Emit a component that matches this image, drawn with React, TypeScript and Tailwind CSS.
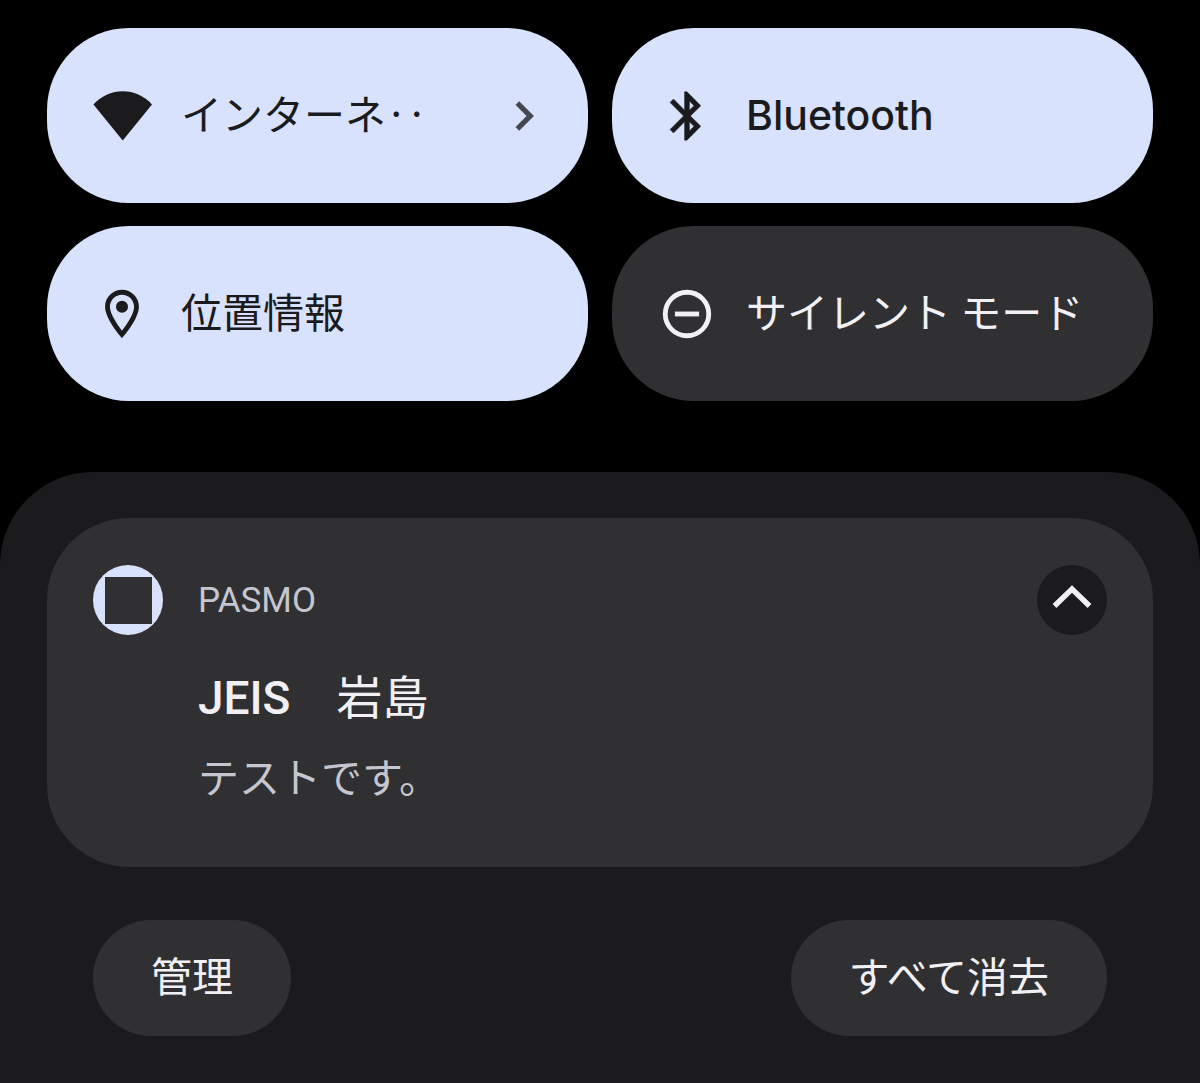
import type { ReactNode } from "react";

const JP = "font-['Noto_Sans_CJK_JP',sans-serif]";

function WifiIcon() {
  return (
    <svg viewBox="0 0 58 58" className="size-[58px] shrink-0 overflow-visible" fill="currentColor" aria-hidden="true">
      <path d="M0.5 17.5A39 39 0 0 1 59 17.5L29.7 53.5Z" />
    </svg>
  );
}

function BluetoothIcon() {
  return (
    <svg viewBox="0 0 24 24" className="size-[58px] shrink-0" fill="currentColor" stroke="currentColor" strokeWidth="0.2" aria-hidden="true">
      <path d="M17.71 7.71L12 2h-1v7.59L6.41 5 5 6.41 10.59 12 5 17.59 6.41 19 11 14.41V22h1l5.71-5.71-4.3-4.29 4.3-4.29zM13 5.83l1.88 1.88L13 9.59V5.83zm1.88 10.46L13 18.17v-3.76l1.88 1.88z" />
    </svg>
  );
}

function PlaceIcon() {
  return (
    <svg viewBox="0 0 24 24" className="size-[58px] shrink-0" fill="currentColor" aria-hidden="true">
      <path d="M12 2C8.13 2 5 5.13 5 9c0 5.25 7 13 7 13s7-7.75 7-13c0-3.87-3.13-7-7-7zM7 9c0-2.76 2.24-5 5-5s5 2.24 5 5c0 2.88-2.88 7.19-5 9.88C9.92 16.21 7 11.85 7 9z" />
      <circle cx="12" cy="9" r="2.5" />
    </svg>
  );
}

function SilentIcon() {
  return (
    <svg viewBox="0 0 24 24" className="size-[58px] shrink-0" fill="none" stroke="currentColor" strokeWidth="2" aria-hidden="true">
      <circle cx="12" cy="12" r="9" />
      <path d="M7 12h10" />
    </svg>
  );
}

function ChevronRight() {
  return (
    <svg viewBox="0 0 24 24" className="size-[58px] shrink-0 text-[#45474f]" fill="currentColor" stroke="currentColor" strokeWidth="0.2" aria-hidden="true">
      <path d="M10 6L8.59 7.41 13.17 12l-4.58 4.59L10 18l6-6z" />
    </svg>
  );
}

type TileProps = { icon: ReactNode; label: string; latin?: boolean; active?: boolean; trailing?: ReactNode };

function Tile({ icon, label, latin = false, active = false, trailing }: TileProps) {
  return (
    <button
      type="button"
      aria-pressed={active}
      className={`flex h-[175px] min-w-0 items-center rounded-[82px] pr-[35px] pl-[46px] text-left ${
        active ? "bg-[#d8e2fd] text-[#1b1b1e]" : "bg-[#303032] text-[#f2f0f5]"
      }`}
    >
      {icon}
      <span
        className={`ml-[30px] flex-1 text-[41px] leading-[60px] whitespace-nowrap ${
          latin ? "pb-[2px] font-['Inter',sans-serif] font-medium" : "pb-[8px] font-normal"
        }`}
      >
        {label}
      </span>
      {trailing}
    </button>
  );
}

export default function App() {
  return (
    <main lang="ja" className={`flex min-h-screen flex-col bg-black ${JP}`}>
      <section className="grid grid-cols-2 gap-x-6 gap-y-[23px] px-[47px] pt-7 pb-[71px]">
        <Tile icon={<WifiIcon />} label="インターネ‥" active trailing={<ChevronRight />} />
        <Tile icon={<BluetoothIcon />} label="Bluetooth" latin active />
        <Tile icon={<PlaceIcon />} label="位置情報" active />
        <Tile icon={<SilentIcon />} label="サイレント モード" />
      </section>

      <section className="flex-1 rounded-t-[93px] bg-[#1b1b1d] px-[47px] pt-[46px] pb-[47px]">
        <article className="flex h-[349px] items-start rounded-[82px] bg-[#303032] px-[46px] pt-[47px]">
          <div className="flex size-[70px] shrink-0 items-center justify-center rounded-full bg-[#d8e2fd]">
            <div className="size-[47px] bg-[#303032]" />
          </div>
          <div className="ml-[35px] flex-1">
            <p className="pt-px font-['Roboto',sans-serif] text-[35px] leading-[70px] text-[#c5c6d0]">PASMO</p>
            <h2 className="mt-[27px] font-['Roboto','Noto_Sans_CJK_JP',sans-serif] text-[46px] leading-[70px] font-medium text-[#f2f0f5]">
              JEIS<span className="font-normal">　岩島</span>
            </h2>
            <p className="mt-[12px] text-[41px] leading-[60px] text-[#c5c6d0]">テストです。</p>
          </div>
          <button
            type="button"
            aria-label="折りたたむ"
            className="flex size-[70px] shrink-0 items-center justify-center rounded-full bg-[#1b1b1d] text-[#f2f0f5]"
          >
            <svg viewBox="0 0 70 70" className="size-[70px]" fill="none" stroke="currentColor" strokeWidth="5.4" aria-hidden="true">
              <path d="M17.5 41L35 24L52.5 41" />
            </svg>
          </button>
        </article>

        <div className="mt-[53px] flex justify-between px-[46px] text-[41px] leading-[60px] text-[#f2f0f5]">
          <button type="button" className="h-[116px] rounded-full bg-[#303032] px-[58px] pb-[8px]">管理</button>
          <button type="button" className="h-[116px] rounded-full bg-[#303032] px-[58px] pb-[8px]">すべて消去</button>
        </div>
      </section>
    </main>
  );
}
